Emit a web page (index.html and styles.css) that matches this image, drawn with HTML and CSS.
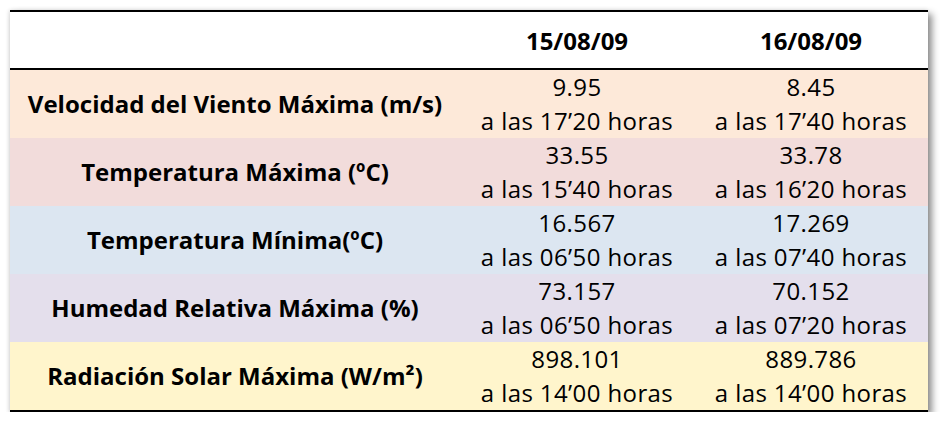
FILE: index.html
```html
<!DOCTYPE html>
<html>
<head>
	<title>Datos meteorológicos</title>
	<link rel="stylesheet" href="styles.css">
</head>
<body>
	<div id="contenedor">
		<table class="tabla">
			<tr class="cabecera">
				<th class="etiqueta"></th>
				<th class="dia">15/08/09</th>
				<th class="dia">16/08/09</th>
			</tr>
			<tr class="viento">
				<th class="etiqueta">Velocidad del Viento Máxima (m/s)</th>
				<td>9.95<br>a las 17’20 horas</td>
				<td>8.45<br>a las 17’40 horas</td>
			</tr>
			<tr class="tmax">
				<th class="etiqueta">Temperatura Máxima (ºC)</th>
				<td>33.55<br>a las 15’40 horas</td>
				<td>33.78<br>a las 16’20 horas</td>
			</tr>
			<tr class="tmin">
				<th class="etiqueta">Temperatura Mínima(ºC)</th>
				<td>16.567<br>a las 06’50 horas</td>
				<td>17.269<br>a las 07’40 horas</td>
			</tr>
			<tr class="humedad">
				<th class="etiqueta">Humedad Relativa Máxima (%)</th>
				<td>73.157<br>a las 06’50 horas</td>
				<td>70.152<br>a las 07’20 horas</td>
			</tr>
			<tr class="radiacion">
				<th class="etiqueta">Radiación Solar Máxima (W/m²)</th>
				<td>898.101<br>a las 14’00 horas</td>
				<td>889.786<br>a las 14’00 horas</td>
			</tr>
		</table>
	</div>
</body>
</html>
```

FILE: styles.css
```css
*{box-sizing: border-box;}
body{
	margin: 0;
	background: white;
	font-family: "Open Sans", "Lato", sans-serif;
	color: #000;
}
#contenedor{
	padding: 10px 0 0 10px;
}
.tabla{
	width: 918px;
	border-collapse: collapse;
	border-top: 2px solid #000;
	border-bottom: 2px solid #000;
	box-shadow: 4px 4px 7px rgba(0,0,0,.45), -1px 0 4px rgba(0,0,0,.12);
	font-size: 24px;
	line-height: 34px;
}
.tabla th, .tabla td{
	padding: 0;
	text-align: center;
	vertical-align: middle;
}
.tabla td{ font-weight: normal; letter-spacing: 0.4px; }
.etiqueta{ width: 450px; font-weight: bold; }
.dia{ width: 234px; }
.cabecera{ height: 58px; border-bottom: 2px solid #000; }
.cabecera th{ padding-top: 2px; }
.tabla tr + tr{ height: 68px; }
.viento{ background-color: #fde9d9; }
.tmax{ background-color: #f2dcdb; }
.tmin{ background-color: #dce6f1; }
.humedad{ background-color: #e4dfec; }
.radiacion{ background-color: #fff5cc; }
```
